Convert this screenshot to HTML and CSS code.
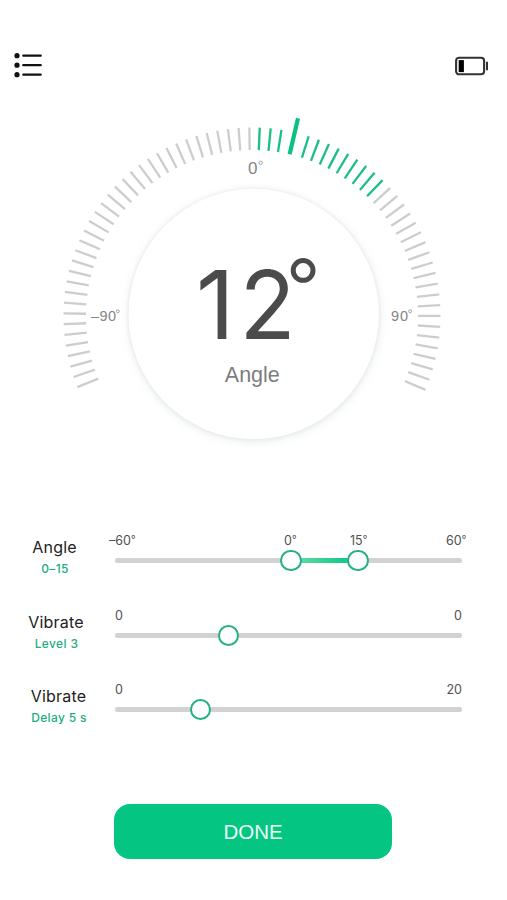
FILE: index.html
```html
<!DOCTYPE html>
<html lang="en">
<head>
<meta charset="utf-8">
<title>Angle</title>
<link rel="stylesheet" href="styles.css">
</head>
<body>
<header class="topbar">
  <svg class="menu" width="28" height="26" viewBox="0 0 28 26" aria-label="Menu">
    <g fill="#111"><circle cx="3" cy="3.7" r="2.6"/><circle cx="3" cy="13.2" r="2.6"/><circle cx="3" cy="22.7" r="2.6"/></g>
    <path d="M9.3 3.7H26.7M9.3 13.2H26.7M9.3 22.7H26.7" stroke="#111" stroke-width="2.3" stroke-linecap="round"/>
  </svg>
  <svg class="battery" width="34" height="20" viewBox="0 0 34 20" aria-label="Battery">
    <rect x="1.1" y="1.7" width="28" height="16.6" rx="3" fill="#fff" stroke="#333" stroke-width="2.1"/>
    <rect x="3.7" y="4.1" width="5.2" height="12" fill="#000"/>
    <path d="M32 5.8V14.2" stroke="#333" stroke-width="2"/>
  </svg>
</header>
<main>
  <svg class="dial" width="507" height="370" viewBox="0 100 507 370">
    <defs><filter id="soft" x="-20%" y="-20%" width="140%" height="140%"><feGaussianBlur stdDeviation="5"/></filter>
    <filter id="edge"><feGaussianBlur stdDeviation="1.6"/></filter></defs>
    <g id="ticks"></g>
    <circle cx="254" cy="316" r="127" fill="#e9efed" opacity=".7" filter="url(#soft)"/>
    <circle cx="253.8" cy="314.6" r="126.3" fill="#e9ecec" filter="url(#edge)"/>
    <circle cx="253.7" cy="314" r="125.2" fill="#fff"/>
    <text class="mark" x="248" y="174.2" font-size="17">0</text><circle class="deg" cx="260.7" cy="162.8" r="1.7"/>
    <text class="mark" x="91" y="321" font-size="14.5" textLength="25">–90</text><circle class="deg" cx="117.8" cy="311.3" r="1.5"/>
    <text class="mark" x="391" y="321" font-size="14.5" textLength="17">90</text><circle class="deg" cx="410.2" cy="311.3" r="1.5"/>
    <text class="value" x="196" y="339">1</text><text class="value" x="239.5" y="339" textLength="56" lengthAdjust="spacingAndGlyphs">2</text>
    <circle class="big-deg" cx="303.1" cy="270.4" r="9.9"/>
    <text class="caption" x="252.3" y="381.7" textLength="55" lengthAdjust="spacingAndGlyphs">Angle</text>
  </svg>
  <section class="settings">
    <div class="row first">
      <div class="label"><b>Angle</b><span>0–15</span></div>
      <div class="slider">
        <span class="tick t-min">–60<i>°</i></span><span class="tick t-zero">0<i>°</i></span><span class="tick t-fifteen">15<i>°</i></span><span class="tick t-max">60<i>°</i></span>
        <div class="track"><div class="fill"></div><div class="knob k-low"></div><div class="knob k-high"></div></div>
      </div>
    </div>
    <div class="row second">
      <div class="label"><b>Vibrate</b><span>Level 3</span></div>
      <div class="slider"><div class="scale"><span>0</span><span>0</span></div>
        <div class="track"><div class="knob k-level"></div></div></div>
    </div>
    <div class="row third">
      <div class="label"><b>Vibrate</b><span>Delay 5 s</span></div>
      <div class="slider"><div class="scale"><span>0</span><span>20</span></div>
        <div class="track"><div class="knob k-delay"></div></div></div>
    </div>
  </section>
  <button class="done">DONE</button>
</main>
<script src="dial.js"></script>
</body>
</html>
```
FILE: styles.css
```css
* { box-sizing: border-box; }
body { margin: 0; width: 507px; height: 900px; overflow: hidden; background: #fff; font-family: Inter, "Liberation Sans", sans-serif; }
.topbar { height: 100px; padding: 52px 18px 0 14px; display: flex; justify-content: space-between; align-items: flex-start; }
.battery { margin-top: 4px; }
.dial { display: block; }
.dial text { font-family: "Liberation Sans", sans-serif; }
.dial .mark { fill: #858585; }
.deg { fill: none; stroke: #999; stroke-width: .9; }
.dial .value { font-family: Inter, sans-serif; font-size: 95px; fill: #4b4b4b; }
.big-deg { fill: none; stroke: #4b4b4b; stroke-width: 5; }
.dial .caption { font-size: 21.5px; fill: #7d7d7d; text-anchor: middle; }
.settings { padding-top: 60px; }
.row { display: flex; height: 75px; }
.row.second { height: 74px; }
.label { width: 109px; padding-top: 7px; display: flex; flex-direction: column; align-items: center; flex: none; }
.second .label { padding-left: 3px; }
.third .label { padding-left: 8px; }
.label b { font-weight: 400; font-size: 16px; line-height: 20px; letter-spacing: .2px; color: #222; }
.label span { font-size: 12px; line-height: 16px; margin: 4px 0 0 1px; font-weight: 500; letter-spacing: .35px; color: #22ad80; }
.slider { position: relative; margin-left: 6px; width: 347px; padding-top: 27.5px; }
.row .scale, .tick { position: absolute; top: 3px; font-size: 12.5px; line-height: 16px; color: #505050; }
.scale { left: 0; right: 0; display: flex; justify-content: space-between; }
.tick i { font-style: normal; font-size: 10px; vertical-align: 2px; line-height: 1; }
.t-min { left: -6px; }
.t-zero { left: 169px; }
.t-fifteen { left: 235px; }
.t-max { left: 331px; }
.track { position: relative; height: 5.5px; border-radius: 2px; background: #d2d2d2; }
.fill { position: absolute; left: 176px; width: 67px; height: 100%; background: linear-gradient(90deg, #6bdcae, #18cb88 75%); }
.knob { position: absolute; top: -8px; width: 21.5px; height: 21.5px; border: 2px solid #25b082; border-radius: 50%; background: #fff; }
.k-low { left: 165px; }
.k-high { left: 232px; }
.k-level { left: 102.5px; }
.k-delay { left: 74.5px; }
.done { display: block; margin: 50px 0 0 114px; width: 278px; height: 55px; border: 0; border-radius: 16px; background: #04c581; color: #e8fff5; font: 20.5px "Liberation Sans", sans-serif; padding: 1px 0 0; }
```
FILE: dial.js
```js
const CX = 252, CY = 316;
const group = document.getElementById("ticks");
function tick(angle, color, inner = 166, outer = 188.5, width = 2.3) {
  const a = angle * Math.PI / 180;
  const line = document.createElementNS("http://www.w3.org/2000/svg", "line");
  line.setAttribute("x1", CX + inner * Math.sin(a));
  line.setAttribute("y1", CY - inner * Math.cos(a));
  line.setAttribute("x2", CX + outer * Math.sin(a));
  line.setAttribute("y2", CY - outer * Math.cos(a));
  line.setAttribute("stroke", color);
  line.setAttribute("stroke-width", width);
  group.appendChild(line);
}
for (let i = 0; i <= 34; i++) tick(-0.8 - i * 3.275, "#cdcdcd");
[2.35, 5.7, 9].forEach(a => tick(a, "#1bbf84"));
tick(13.1, "#0bc180", 166, 203, 4.2);
for (let i = 0; i <= 29; i++) tick(17.5 + i * 3.295, i < 9 ? "#1bbf84" : "#cdcdcd");
```
